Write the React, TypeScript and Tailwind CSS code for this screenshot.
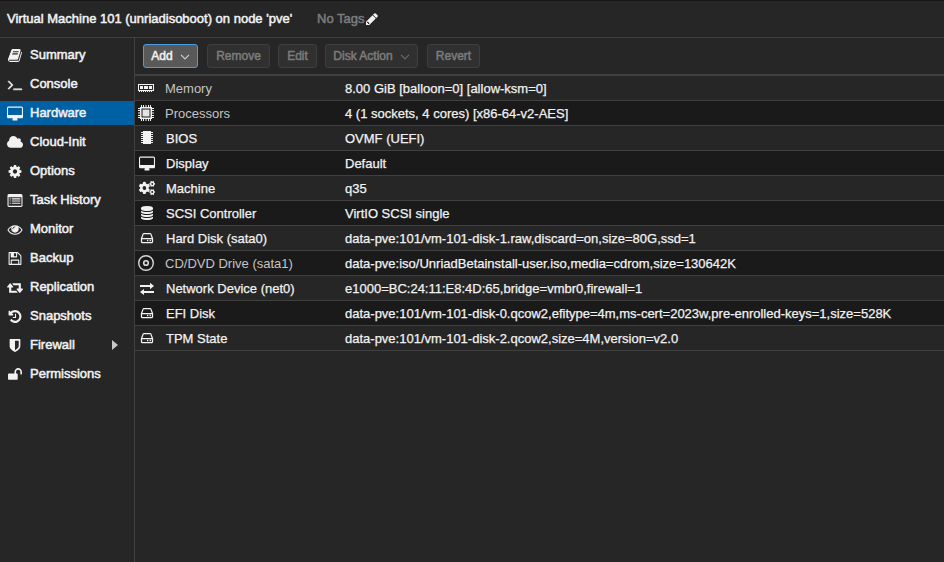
import type { ReactNode } from "react";
import { FaCogs } from "react-icons/fa";
import clsx from "clsx";

const paths = {
  book: "M1703 478q40 57 18 129l-275 906q-19 64-76.5 107.5t-122.5 43.5h-923q-77 0-148.500-53.5t-99.500-131.500q-24-67-2-127 0-4 3-27t4-37q1-8-3-21.500t-3-19.500q2-11 8-21t16.500-23.500 16.500-23.500q23-38 45-91.500t30-91.500q3-10 .5-30t-.5-28q3-11 17-28t17-23q21-36 42-92t25-90q1-9-2.500-32t.5-28q4-13 22-30.500t22-22.500q19-26 42.500-84.500t27.500-96.500q1-8-3-25.500t-2-26.500q2-8 9-18t18-23 17-21q8-12 16.500-30.500t15-35 16-36 19.500-32 26.500-23.500 36-11.500 47.500 5.500l-1 3q38-9 51-9h761q74 0 114 56t18 130l-274 906q-36 119-71.500 153.500t-128.500 34.500h-869q-27 0-38 15-11 16-1 43 24 70 144 70h923q29 0 56-15.500t35-41.500l300-987q7-22 5-57 38 15 59 43zm-1064 2q-4 13 2 22.500t20 9.500h608q13 0 25.500-9.500t16.500-22.500l21-64q4-13-2-22.500t-20-9.500h-608q-13 0-25.500 9.500t-16.500 22.500zm-83 256q-4 13 2 22.500t20 9.500h608q13 0 25.500-9.500t16.500-22.500l21-64q4-13-2-22.500t-20-9.500h-608q-13 0-25.500 9.500t-16.500 22.500z",
  terminal: "M649 983l-466 466q-10 10-23 10t-23-10l-50-50q-10-10-10-23t10-23l393-393-393-393q-10-10-10-23t10-23l50-50q10-10 23-10t23 10l466 466q10 10 10 23t-10 23zm1079 457v64q0 14-9 23t-23 9h-960q-14 0-23-9t-9-23v-64q0-14 9-23t23-9h960q14 0 23 9t9 23z",
  desktop: "M1792 992v-832q0-13-9.5-22.5t-22.5-9.5h-1600q-13 0-22.500 9.500t-9.500 22.500v832q0 13 9.500 22.500t22.500 9.500h1600q13 0 22.500-9.500t9.500-22.500zm128-832v1088q0 66-47 113t-113 47h-544q0 37 16 77.500t32 71 16 43.500q0 26-19 45t-45 19h-512q-26 0-45-19t-19-45q0-14 16-44t32-70 16-78h-544q-66 0-113-47t-47-113v-1088q0-66 47-113t113-47h1600q66 0 113 47t47 113z",
  cloud: "M1984 1152q0 159-112.500 271.500t-271.500 112.500h-1088q-185 0-316.500-131.500t-131.500-316.500q0-132 71-241.500t187-163.500q-2-28-2-43 0-212 150-362t362-150q158 0 286.500 88t187.500 230q70-62 166-62 106 0 181 75t75 181q0 75-41 138 129 30 213 134.500t84 239.500z",
  cog: "M1152 896q0-106-75-181t-181-75-181 75-75 181 75 181 181 75 181-75 75-181zm512-109v222q0 12-8 23t-20 13l-185 28q-19 54-39 91 35 50 107 138 10 12 10 25t-9 23q-27 37-99 108t-94 71q-12 0-26-9l-138-108q-44 23-91 38-16 136-29 186-7 28-36 28h-222q-14 0-24.500-8.500t-11.500-21.500l-28-184q-49-16-90-37l-141 107q-10 9-25 9-14 0-25-11-126-114-165-168-7-10-7-23 0-12 8-23 15-21 51-66.500t54-70.500q-27-50-41-99l-183-27q-13-2-21-12.500t-8-23.500v-222q0-12 8-23t19-13l186-28q14-46 39-92-40-57-107-138-10-12-10-24 0-10 9-23 26-36 98.500-107.500t94.500-71.500q13 0 26 10l138 107q44-23 91-38 16-136 29-186 7-28 36-28h222q14 0 24.500 8.500t11.500 21.500l28 184q49 16 90 37l142-107q9-9 24-9 13 0 25 10 129 119 165 170 7 8 7 22 0 12-8 23-15 21-51 66.500t-54 70.500q26 50 41 98l183 28q13 2 21 12.500t8 23.500z",
  list: "M0 288q0-66 47-113t113-47h1472q66 0 113 47t47 113v1216q0 66-47 113t-113 47h-1472q-66 0-113-47t-47-113zM128 512v992q0 32 32 32h1472q32 0 32-32v-992zM256 640h128v128h-128zM512 640h1024v128h-1024zM256 896h128v128h-128zM512 896h1024v128h-1024zM256 1152h128v128h-128zM512 1152h1024v128h-1024z",
  eye: "M1664 960q-152-236-381-353 61 104 61 225 0 185-131.500 316.500t-316.500 131.500-316.500-131.500-131.500-316.500q0-121 61-225-229 117-381 353 133 205 333.500 326.500t434.500 121.500 434.500-121.500 333.500-326.500zm-720-384q0-20-14-34t-34-14q-125 0-214.500 89.500t-89.500 214.500q0 20 14 34t34 14 34-14 14-34q0-86 61-147t147-61q20 0 34-14t14-34zm848 384q0 34-20 69-140 230-376.500 368.500t-499.500 138.500-499.500-139-376.500-368q-20-35-20-69t20-69q140-229 376.500-368t499.500-139 499.500 139 376.500 368q20 35 20 69z",
  floppy: "M512 1536h768v-384h-768v384zm896 0h128v-896q0-14-10-38.500t-20-34.500l-281-281q-10-10-34-20t-39-10v416q0 40-28 68t-68 28h-576q-40 0-68-28t-28-68v-416h-128v1280h128v-416q0-40 28-68t68-28h832q40 0 68 28t28 68v416zm-384-928v-320q0-13-9.500-22.500t-22.500-9.500h-192q-13 0-22.500 9.500t-9.500 22.500v320q0 13 9.500 22.500t22.500 9.500h192q13 0 22.500-9.500t9.500-22.500zm640 32v928q0 40-28 68t-68 28h-1344q-40 0-68-28t-28-68v-1344q0-40 28-68t68-28h928q40 0 88 20t76 48l280 280q28 28 48 76t20 88z",
  retweet: "M1280 1504q0 13-9.500 22.500t-22.500 9.500h-960q-8 0-13.500-2t-9-7-5.500-8-3-11.500-1-11.500v-600h-192q-26 0-45-19t-19-45q0-24 15-41l320-384q19-22 49-22t49 22l320 384q15 17 15 41 0 26-19 45t-45 19h-192v384h576q16 0 25 11l160 192q7 10 7 21zm640-416q0 24-15 41l-320 384q-20 23-49 23t-49-23l-320-384q-15-17-15-41 0-26 19-45t45-19h192v-384h-576q-16 0-25-12l-160-192q-7-9-7-20 0-13 9.500-22.500t22.500-9.500h960q8 0 13.500 2t9 7 5.500 8 3 11.500 1 11.500v600h192q26 0 45 19t19 45z",
  history: "M1664 896q0 156-61 298t-164 245-245 164-298 61q-172 0-327-72.500t-264-204.500q-7-10-6.500-22.500t8.500-20.500l137-138q10-9 25-9 16 2 23 12 73 95 179 147t225 52q104 0 198.500-40.500t163.500-109.500 109.500-163.500 40.500-198.500-40.500-198.500-109.500-163.500-163.500-109.500-198.500-40.500q-98 0-188 35.500t-160 101.500l137 138q31 30 14 69-17 40-59 40h-448q-26 0-45-19t-19-45v-448q0-42 40-59 39-17 69 14l130 129q107-101 244.500-156.500t284.500-55.500q156 0 298 61t245 164 164 245 61 298zm-640-288v448q0 14-9 23t-23 9h-320q-14 0-23-9t-9-23v-64q0-14 9-23t23-9h224v-352q0-14 9-23t23-9h64q14 0 23 9t9 23z",
  shield: "M1344 960v-640h-448v1137q119-63 213-137 235-184 235-360zm192-768v768q0 86-33.500 170.500t-83 150-118 127.500-126.500 103-121 77.500-89.500 49.500-42.500 20q-12 6-26 6t-26-6q-16-7-42.500-20t-89.500-49.500-121-77.500-126.500-103-118-127.500-83-150-33.500-170.500v-768q0-26 19-45t45-19h1152q26 0 45 19t19 45z",
  unlock: "M1728 576v256q0 26-19 45t-45 19h-64q-26 0-45-19t-19-45v-256q0-106-75-181t-181-75-181 75-75 181v192h96q40 0 68 28t28 68v576q0 40-28 68t-68 28h-960q-40 0-68-28t-28-68v-576q0-40 28-68t68-28h672v-192q0-185 131.500-316.500t316.500-131.500 316.500 131.500 131.500 316.500z",
  pencil: "M491 1536l91-91-235-235-91 91v107h128v128h107zm469-1120l416 416-832 832h-416v-416zm683 96q0 53-37 90l-166 166-416-416 166-165q36-38 90-38 53 0 91 38l235 234q37 39 37 91z",
  database: "M896 768q237 0 443-43t325-127v170q0 69-103 128t-280 93.500-385 34.500-385-34.500-280-93.500-103-128v-170q119 84 325 127t443 43zm0 768q237 0 443-43t325-127v170q0 69-103 128t-280 93.500-385 34.500-385-34.500-280-93.500-103-128v-170q119 84 325 127t443 43zm0-384q237 0 443-43t325-127v170q0 69-103 128t-280 93.500-385 34.500-385-34.500-280-93.500-103-128v-170q119 84 325 127t443 43zm0-1152q208 0 385 34.500t280 93.500 103 128v128q0 69-103 128t-280 93.500-385 34.500-385-34.500-280-93.500-103-128v-128q0-69 103-128t280-93.500 385-34.500z",
};

type IconName = keyof typeof paths;

const boxes: Partial<Record<IconName, string>> = {
  desktop: "0 -64 1920 1792",
  cloud: "64 0 1920 1792",
  retweet: "0 0 1920 1792",
};

function Icon({ name, className }: { name: IconName; className?: string }) {
  return (
    <svg viewBox={boxes[name] ?? "0 0 1792 1792"} fill="currentColor" fillRule="evenodd" className={clsx("shrink-0", className ?? "h-[15px] w-4")}>
      <path d={paths[name]} stroke="currentColor" strokeWidth={name === "terminal" ? 70 : 0} />
    </svg>
  );
}

function MemoryIcon() {
  return (
    <svg viewBox="0 0 16 16" fill="currentColor" shapeRendering="crispEdges" className="size-4">
      <path fillRule="evenodd" d="M0 4h16v7H0zM1 5v5h14V5z" />
      <path d="M2 6h3v3H2zM6 6h4v3H6zM11 6h3v3h-3zM1 11h1v1H1zM3 11h1v1H3zM5 11h1v1H5zM7 11h1v1H7zM9 11h1v1H9zM11 11h1v1h-1zM13 11h1v1h-1z" />
    </svg>
  );
}

function CpuIcon() {
  return (
    <svg viewBox="0 0 16 16" fill="currentColor" className="size-4">
      <path fillRule="evenodd" d="M2 2h12v12H2zM3.500 3.500v9h9v-9z" />
      <path d="M4.500 4.500h7v7h-7z" className="fill-[#e2e2e2]" />
      <path d="M3 0h1v2H3zM5 0h1v2H5zM7.500 0h1v2h-1zM10 0h1v2h-1zM12 0h1v2h-1zM3 14h1v2H3zM5 14h1v2H5zM7.500 14h1v2h-1zM10 14h1v2h-1zM12 14h1v2h-1zM0 3h2v1H0zM0 5h2v1H0zM0 7.500h2v1H0zM0 10h2v1H0zM0 12h2v1H0zM14 3h2v1h-2zM14 5h2v1h-2zM14 7.500h2v1h-2zM14 10h2v1h-2zM14 12h2v1h-2z" />
    </svg>
  );
}

function ChipIcon() {
  return (
    <svg viewBox="0 0 14 14" fill="currentColor" shapeRendering="crispEdges" className="ml-0.5 size-3.5">
      <path d="M3 0h8v13H3zM1 1h12v1H1zM1 3h12v1H1zM1 5h12v1H1zM1 7h12v1H1zM1 9h12v1H1zM1 11h12v1H1z" />
    </svg>
  );
}

function DiskIcon() {
  return (
    <svg viewBox="0 0 14 14" fill="none" stroke="currentColor" className="ml-0.5 size-3.5">
      <path d="M1.500 7.500L3.100 3.100Q3.300 2.500 4 2.500H10Q10.700 2.500 10.900 3.100L12.500 7.500M1.500 7.500H12.500V11Q12.500 11.500 12 11.500H2Q1.500 11.500 1.500 11Z" strokeWidth="1.250" />
      <path d="M7 9.500h1.300M9.600 9.500h1.300" strokeWidth="1.300" />
    </svg>
  );
}

function DiscIcon() {
  return (
    <svg viewBox="0 0 16 16" fill="none" stroke="#d8d8d8" className="size-4">
      <circle cx="8" cy="8" r="7.300" strokeWidth="1.400" />
      <circle cx="8" cy="8" r="2.300" strokeWidth="1.600" />
    </svg>
  );
}

function ExchangeIcon() {
  return (
    <svg viewBox="0 0 14 14" fill="currentColor" className="ml-0.5 size-3.5">
      <path d="M0 4h10V1.800L14 5L10 8.200V6H0zM14 12H4V14L0 11L4 7.900V10H14z" />
    </svg>
  );
}

function Chevron() {
  return (
    <svg viewBox="0 0 10 6" fill="none" stroke="currentColor" strokeWidth="1.200" className="ml-[7px] mt-0.5 h-1.5 w-2.5 opacity-75">
      <path d="M1 0.800L5 4.800L9 0.800" />
    </svg>
  );
}

const menu: { icon: IconName; label: string }[] = [
  { icon: "book", label: "Summary" },
  { icon: "terminal", label: "Console" },
  { icon: "desktop", label: "Hardware" },
  { icon: "cloud", label: "Cloud-Init" },
  { icon: "cog", label: "Options" },
  { icon: "list", label: "Task History" },
  { icon: "eye", label: "Monitor" },
  { icon: "floppy", label: "Backup" },
  { icon: "retweet", label: "Replication" },
  { icon: "history", label: "Snapshots" },
  { icon: "shield", label: "Firewall" },
  { icon: "unlock", label: "Permissions" },
];

const rows: { icon: ReactNode; label: string; value: string; muted?: boolean }[] = [
  { icon: <MemoryIcon />, label: "Memory", value: "8.00 GiB [balloon=0] [allow-ksm=0]", muted: true },
  { icon: <CpuIcon />, label: "Processors", value: "4 (1 sockets, 4 cores) [x86-64-v2-AES]", muted: true },
  { icon: <ChipIcon />, label: "BIOS", value: "OVMF (UEFI)" },
  { icon: <Icon name="desktop" className="ml-px h-[15px] w-4" />, label: "Display", value: "Default" },
  { icon: <FaCogs preserveAspectRatio="none" className="ml-px h-3.5 w-4" />, label: "Machine", value: "q35" },
  { icon: <Icon name="database" className="ml-0.5 size-3.5" />, label: "SCSI Controller", value: "VirtIO SCSI single" },
  { icon: <DiskIcon />, label: "Hard Disk (sata0)", value: "data-pve:101/vm-101-disk-1.raw,discard=on,size=80G,ssd=1" },
  { icon: <DiscIcon />, label: "CD/DVD Drive (sata1)", value: "data-pve:iso/UnriadBetainstall-user.iso,media=cdrom,size=130642K", muted: true },
  { icon: <ExchangeIcon />, label: "Network Device (net0)", value: "e1000=BC:24:11:E8:4D:65,bridge=vmbr0,firewall=1" },
  { icon: <DiskIcon />, label: "EFI Disk", value: "data-pve:101/vm-101-disk-0.qcow2,efitype=4m,ms-cert=2023w,pre-enrolled-keys=1,size=528K" },
  { icon: <DiskIcon />, label: "TPM State", value: "data-pve:101/vm-101-disk-2.qcow2,size=4M,version=v2.0" },
];

const heavy = "[-webkit-text-stroke:0.5px_currentColor]";
const medium = "[-webkit-text-stroke:0.25px_currentColor]";
const button = "flex h-6 items-center justify-center rounded-[3px] border text-xs";
const disabled = "border-[#3e3e3e] bg-[#303030] text-[#7c7c7c]";

export default function App() {
  return (
    <div className="flex h-[562px] w-[944px] flex-col overflow-hidden whitespace-nowrap border-t border-[#171717] bg-[#262626] font-['Liberation_Sans',Arial,sans-serif] text-[13px] text-[#f2f2f2]">
      <header className={clsx("flex h-[37px] shrink-0 items-center border-b border-[#404040] pl-[7px]", heavy)}>
        <span className="w-[310px]">Virtual Machine 101 (unriadisoboot) on node 'pve'</span>
        <span className="text-[#7c7c7c]">No Tags</span>
        <Icon name="pencil" className="ml-px size-3.5" />
      </header>
      <div className="flex min-h-0 flex-1">
        <nav className={clsx("flex w-[135px] shrink-0 flex-col gap-[5px] border-r border-[#404040] pt-[5px]", heavy)}>
          {menu.map((item) => (
            <a key={item.label} className={clsx("flex h-6 items-center pl-[7px]", item.label === "Hardware" && "bg-[#0060a4]")}>
              <Icon name={item.icon} />
              <span className="ml-[7px] flex-1">{item.label}</span>
              {item.label === "Firewall" && (
                <svg viewBox="0 0 6 10" className="mr-4 h-2.5 w-1.5 fill-[#c8c8c8]"><path d="M0 0L6 5L0 10z" /></svg>
              )}
            </a>
          ))}
        </nav>
        <main className="flex min-w-0 flex-1 flex-col">
          <div className={clsx("flex h-[38px] shrink-0 items-center border-b-2 border-[#404040] pl-2", heavy)}>
            <button className={clsx(button, "w-[55px] border-[#4a9de2] bg-[#595959]")}>Add<Chevron /></button>
            <button className={clsx(button, disabled, "ml-[9px] w-[63px]")}>Remove</button>
            <button className={clsx(button, disabled, "ml-2 w-[39px]")}>Edit</button>
            <button className={clsx(button, disabled, "ml-2 w-[93px]")}>Disk Action<Chevron /></button>
            <button className={clsx(button, disabled, "ml-[9px] w-[53px]")}>Revert</button>
          </div>
          {rows.map((row) => (
            <div key={row.label} className="flex h-[25px] shrink-0 items-center border-b border-[#404040] pl-[3px] even:bg-[#262626] odd:bg-[#1a1a1a]">
              <span className="w-[27px]">{row.icon}</span>
              <span className={clsx("w-[180px] pt-px", row.muted ? "text-[#c4c4c4]" : ["pl-px", medium])}>{row.label}</span>
              <span className={clsx("pt-px", medium)}>{row.value}</span>
            </div>
          ))}
        </main>
      </div>
    </div>
  );
}
